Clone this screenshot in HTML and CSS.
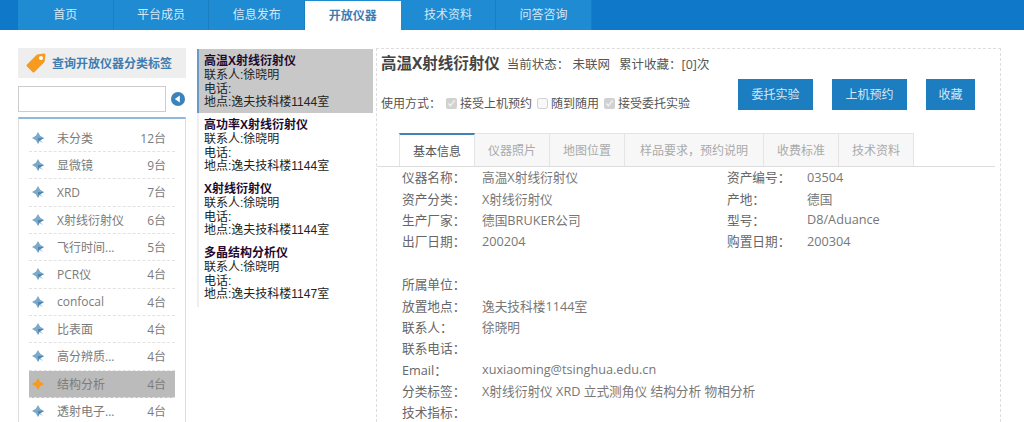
FILE: index.html
```html
<!DOCTYPE html>
<html>
<head>
<meta charset="utf-8" />
<title>开放仪器</title>
<link rel="stylesheet" href="styles.css">
</head>
<body>
<svg class="defs" width="0" height="0">
	<symbol id="star" viewBox="0 0 14 14">
		<path d="M7 0 L9.5 4.5 L14 7 L9.5 9.5 L7 14 L4.5 9.5 L0 7 L4.5 4.5 Z" fill="currentColor"/>
		<path d="M7 7 L14 7 L9.5 9.5 L13 13 L8 9.5 L7 14 Z" fill="#4f86ad"/>
	</symbol>
</svg>

<div class="nav">
	<a href="#">首页</a>
	<a href="#">平台成员</a>
	<a href="#">信息发布</a>
	<a href="#" class="on">开放仪器</a>
	<a href="#">技术资料</a>
	<a href="#">问答咨询</a>
</div>

<div class="main">
	<div class="side">
		<div class="side_title">
			<svg class="tag" width="20" height="20" viewBox="0 0 20 20">
				<path d="M11 1.5 L18 0.5 Q19.5 0.5 19.5 2 L18.5 9 L8.5 19 Q7.5 20 6.5 19 L1 13.5 Q0 12.5 1 11.5 Z" fill="#f79a1e"/>
				<circle cx="15" cy="5" r="2" fill="#fff"/>
			</svg>
			查询开放仪器分类标签
		</div>
		<div class="search">
			<input type="text" class="search_box">
			<svg width="14" height="14" viewBox="0 0 14 14">
				<circle cx="7" cy="7" r="7" fill="#3b83b8"/>
				<path d="M8.8 3.4 V10.6 L3.8 7 Z" fill="#fff"/>
			</svg>
		</div>
		<ul class="tags">
			<li><svg><use href="#star"/></svg><span>未分类</span><em>12台</em></li>
			<li><svg><use href="#star"/></svg><span>显微镜</span><em>9台</em></li>
			<li><svg><use href="#star"/></svg><span>XRD</span><em>7台</em></li>
			<li><svg><use href="#star"/></svg><span>X射线衍射仪</span><em>6台</em></li>
			<li><svg><use href="#star"/></svg><span>飞行时间...</span><em>5台</em></li>
			<li><svg><use href="#star"/></svg><span>PCR仪</span><em>4台</em></li>
			<li><svg><use href="#star"/></svg><span>confocal</span><em>4台</em></li>
			<li><svg><use href="#star"/></svg><span>比表面</span><em>4台</em></li>
			<li><svg><use href="#star"/></svg><span>高分辨质...</span><em>4台</em></li>
			<li class="sel"><svg viewBox="0 0 14 14"><path d="M7 0 L9.5 4.5 L14 7 L9.5 9.5 L7 14 L4.5 9.5 L0 7 L4.5 4.5 Z" fill="#f79a1e"/></svg><span>结构分析</span><em>4台</em></li>
			<li><svg><use href="#star"/></svg><span>透射电子...</span><em>4台</em></li>
		</ul>
	</div>

	<div class="list">
		<div class="item sel">
			<b>高温X射线衍射仪</b>
			联系人:徐晓明<br>电话:<br>地点:逸夫技科楼1144室
		</div>
		<div class="item">
			<b>高功率X射线衍射仪</b>
			联系人:徐晓明<br>电话:<br>地点:逸夫技科楼1144室
		</div>
		<div class="item">
			<b>X射线衍射仪</b>
			联系人:徐晓明<br>电话:<br>地点:逸夫技科楼1144室
		</div>
		<div class="item">
			<b>多晶结构分析仪</b>
			联系人:徐晓明<br>电话:<br>地点:逸夫技科楼1147室
		</div>
	</div>

	<div class="detail">
		<div class="head">
			<div class="head_l">
				<div class="name_row"><h1>高温X射线衍射仪</h1><span>当前状态： 未联网</span><span>累计收藏：[0]次</span></div>
				<div class="use_row">使用方式：
					<label><input type="checkbox" checked disabled>接受上机预约</label>
					<label><input type="checkbox" disabled>随到随用</label>
					<label><input type="checkbox" checked disabled>接受委托实验</label>
				</div>
			</div>
			<div class="btns">
				<a href="#">委托实验</a>
				<a href="#">上机预约</a>
				<a href="#" class="small">收藏</a>
			</div>
		</div>

		<div class="tabs">
			<a href="#" class="on">基本信息</a>
			<a href="#">仪器照片</a>
			<a href="#">地图位置</a>
			<a href="#" class="wide">样品要求，预约说明</a>
			<a href="#">收费标准</a>
			<a href="#">技术资料</a>
		</div>

		<div class="info">
			<label>仪器名称：</label><span>高温X射线衍射仪</span><label>资产编号：</label><span>03504</span>
			<label>资产分类：</label><span>X射线衍射仪</span><label>产地：</label><span>德国</span>
			<label>生产厂家：</label><span>德国BRUKER公司</span><label>型号：</label><span>D8/Aduance</span>
			<label>出厂日期：</label><span>200204</span><label>购置日期：</label><span>200304</span>
			<div class="blank"></div>
			<label>所属单位：</label><span class="full"></span>
			<label>放置地点：</label><span class="full">逸夫技科楼1144室</span>
			<label>联系人：</label><span class="full">徐晓明</span>
			<label>联系电话：</label><span class="full"></span>
			<label>Email：</label><span class="full">xuxiaoming@tsinghua.edu.cn</span>
			<label>分类标签：</label><span class="full">X射线衍射仪 XRD 立式测角仪 结构分析 物相分析</span>
			<label>技术指标：</label><span class="full"></span>
		</div>
	</div>
</div>
</body>
</html>
```

FILE: styles.css
```css
html,body{
	margin:0;
	height:422px;
	overflow:hidden;
	background:#fff;
}
body{
	font-family:"Open Sans","Noto Sans CJK SC",sans-serif;
	font-size:12px;
	color:#666;
}
a{
	text-decoration:none;
}
.defs{
	position:absolute;
}

.nav{
	display:flex;
	height:30px;
	padding-left:18px;
	background:#0f78c9;
}
.nav a{
	width:95.67px;
	line-height:30px;
	text-align:center;
	color:#d4e8f6;
	background:#1f8bd2;
	border-right:1px solid #1a7fc2;
	box-sizing:border-box;
}
.nav a.on{
	background:#fff;
	color:#3f7cb0;
	font-weight:bold;
	border-right:0;
	border-top:1px solid #1f8bd2;
}

.main{
	display:flex;
	height:392px;
	padding:18px 0 0 18px;
	box-sizing:border-box;
	overflow:hidden;
}

.side{
	width:168px;
	margin-right:11px;
	flex:none;
}
.side_title{
	display:flex;
	align-items:center;
	gap:6px;
	height:30px;
	padding-left:8px;
	background:#eee;
	color:#3f7cb0;
	font-weight:bold;
}
.search{
	display:flex;
	align-items:center;
	gap:5px;
	margin:8px 0 5px;
}
.search_box{
	width:148px;
	height:26px;
	padding:0;
	border:1px solid #ccc;
	box-sizing:border-box;
	background:#fff;
}
.tags{
	list-style:none;
	margin:0;
	padding:5.5px 10px 0;
	border:1px solid #ddd;
	border-top:2px solid #8fb8dc;
}
.tags li{
	display:flex;
	align-items:center;
	height:27.35px;
	padding:0 9px 0 3px;
	border-bottom:1px dashed #e2e2e2;
	box-sizing:border-box;
	color:#7b7b7b;
}
.tags li svg{
	width:12px;
	height:12px;
	color:#7aa9c9;
	flex:none;
	margin-right:13px;
}
.tags li span{
	flex:1;
	white-space:nowrap;
}
.tags li em{
	font-style:normal;
}
.tags li.sel{
	background:#bbb;
}

.list{
	width:176px;
	margin-right:3px;
	margin-top:1px;
	flex:none;
	height:258px;
	border-left:2px solid #eee;
	box-sizing:border-box;
	font-family:"Liberation Sans","Noto Sans CJK SC",sans-serif;
}
.item{
	height:64px;
	padding:6px 0 0 5px;
	margin-left:-2px;
	border-left:2px solid transparent;
	box-sizing:border-box;
	line-height:13.8px;
	color:#222;
}
.item b{
	display:block;
	color:#220a2e;
}
.item.sel{
	background:#c8c8c8;
	border-left-color:#6a9bc7;
}

.detail{
	width:625px;
	flex:none;
	border:1px dashed #ddd;
	border-bottom:0;
	box-sizing:border-box;
}
.head{
	display:flex;
	justify-content:space-between;
	height:84px;
	padding:0 25px 0 4px;
}
.name_row{
	display:flex;
	align-items:baseline;
	gap:9px;
	padding-top:2px;
	color:#555;
	font-size:12.5px;
}
.name_row h1{
	margin:0 -2px 0 0;
	font-size:15.5px;
	font-weight:bold;
	color:#444;
}
.use_row{
	display:flex;
	align-items:center;
	margin-top:20px;
	color:#555;
	white-space:nowrap;
}
.use_row label{
	display:flex;
	align-items:center;
}
.use_row input{
	width:11px;
	height:11px;
	margin:0 3px 0 5px;
}
.btns{
	display:flex;
	gap:19px;
	padding-top:30px;
}
.btns a{
	width:75px;
	height:31px;
	line-height:31px;
	text-align:center;
	background:#1c7dc1;
	color:#d4e8f6;
}
.btns a.small{
	width:49px;
}

.tabs{
	display:flex;
	height:34px;
	margin:0 5px 0 0;
	padding-left:22px;
	border-bottom:1px solid #ddd;
	box-sizing:border-box;
}
.tabs a{
	width:75px;
	line-height:34px;
	text-align:center;
	color:#aaa;
	background:#f7f7f7;
	border:1px solid #e4e4e4;
	border-left:0;
	border-bottom:0;
	box-sizing:border-box;
}
.tabs a.wide{
	width:139px;
}
.tabs a.on{
	width:76px;
	background:#fff;
	color:#555;
	border-top:2px solid #3f83b5;
	border-left:1px solid #e4e4e4;
}

.info{
	display:grid;
	grid-template-columns:80px 245px 80px 1fr;
	grid-auto-rows:21.4px;
	align-items:center;
	margin-top:-1px;
	padding-left:25px;
	color:#777;
	font-size:12.7px;
}
.info label{
	color:#666;
}
.info .blank{
	grid-column:1 / -1;
}
.info .full{
	grid-column:2 / -1;
}
```
